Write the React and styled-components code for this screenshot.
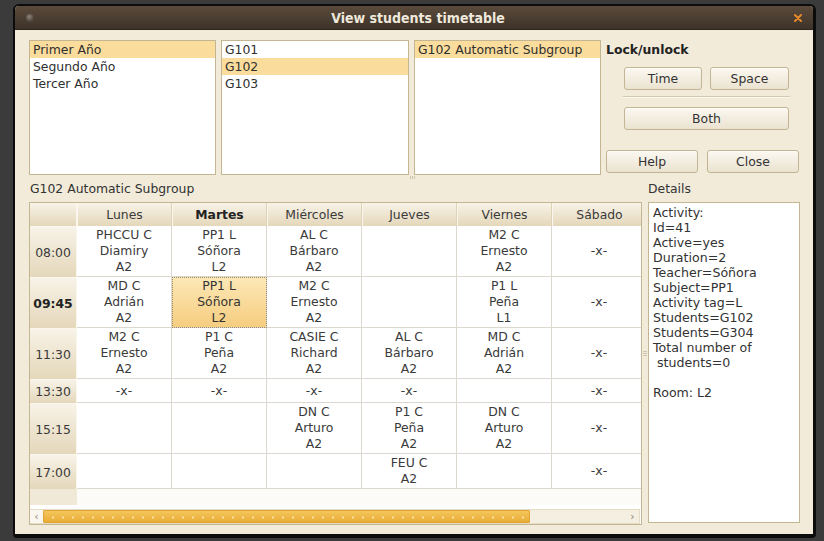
import React from 'react';
import styled, { createGlobalStyle, css } from 'styled-components';

const Global = createGlobalStyle`
  html, body { margin: 0; padding: 0; background: #3b3b3b; }
  body {
    font-family: "DejaVu Sans", "Liberation Sans", sans-serif;
    font-size: 12.4px;
    color: #333;
  }
  * { box-sizing: border-box; }
`;

const Screen = styled.div`
  width: 824px;
  height: 541px;
  padding: 4px 8px 3px 13px;
  display: flex;
`;

const Window = styled.div`
  flex: 1;
  display: flex;
  flex-direction: column;
  background: #f2ebda;
  border-style: solid;
  border-color: #0c0c0c;
  border-width: 2px 3px 4px 2px;
  border-radius: 6px 6px 4px 4px;
  overflow: hidden;
`;

const TitleBar = styled.div`
  height: 24px;
  flex: none;
  display: grid;
  grid-template-columns: 30px 1fr 30px;
  align-items: center;
  background: linear-gradient(#5a4a3b, #3e3329);
  border-bottom: 1px solid #2e261e;
`;

const WinDot = styled.span`
  justify-self: start;
  margin-left: 11px;
  width: 8px;
  height: 8px;
  border-radius: 50%;
  background: radial-gradient(circle at 40% 35%, #8c837a, #4b4138 70%);
`;

const Title = styled.div`
  text-align: center;
  font-family: "DejaVu Sans Condensed", "DejaVu Sans", sans-serif;
  font-stretch: condensed;
  font-weight: bold;
  font-size: 14px;
  color: #efe9dc;
  padding-left: 8px;
`;

const CloseX = styled.svg`
  justify-self: center;
  width: 8px;
  height: 8px;
`;

const Content = styled.div`
  flex: 1;
  display: flex;
  flex-direction: column;
  padding: 10px 13px 9px 14px;
`;

const TopSection = styled.div`
  height: 135px;
  flex: none;
  display: flex;
  gap: 5px;
`;

const ListBox = styled.div`
  width: ${p => p.$w}px;
  flex: none;
  background: #fff;
  border: 1px solid #c4b692;
`;

const ListItem = styled.div`
  height: 17px;
  line-height: 17px;
  padding-left: 3px;
  color: #2f2f2f;
  background: ${p => (p.$selected ? '#fadc9c' : 'transparent')};
  white-space: nowrap;
`;

const Panel = styled.div`
  flex: 1;
  display: flex;
  flex-direction: column;
`;

const PanelTitle = styled.div`
  font-weight: bold;
  margin-top: 3px;
  line-height: 14px;
  color: #222;
`;

const LockGroup = styled.div`
  margin: 10px 11px 0 18px;
  display: flex;
  flex-direction: column;
`;

const ButtonRow = styled.div`
  display: flex;
  gap: ${p => p.$gap}px;
`;

const Button = styled.button`
  width: ${p => (p.$w ? `${p.$w}px` : '100%')};
  height: 23px;
  padding: 0;
  font-family: "DejaVu Sans", sans-serif;
  font-size: 12.4px;
  color: #333;
  background: linear-gradient(#fbf8f1, #ebe3d0);
  border: 1px solid #c3b594;
  border-radius: 3px;
  box-shadow: inset 0 1px 0 #fffdf8;
`;

const Separator = styled.div`
  margin: 6px -1px 9px -1px;
  height: 2px;
  border-top: 1px solid #d5cab0;
  border-bottom: 1px solid #fbf8f1;
`;

const BottomButtons = styled(ButtonRow)`
  margin-top: auto;
  margin-bottom: 2px;
`;

const HHandle = styled.div`
  height: 6px;
  flex: none;
  display: flex;
  justify-content: center;
  align-items: flex-start;
  padding-top: 1px;
  gap: 1px;
  padding-right: 4px;
`;

const Tick = styled.span`
  width: 1px;
  height: 3px;
  background: #cfc4aa;
`;

const BottomSection = styled.div`
  flex: 1;
  display: flex;
`;

const Column = styled.div`
  width: ${p => p.$w}px;
  flex: none;
  display: flex;
  flex-direction: column;
`;

const SectionLabel = styled.div`
  height: 21px;
  line-height: 15px;
  padding-left: ${p => p.$pl || 0}px;
  color: #333;
  flex: none;
`;

const VHandle = styled.div`
  width: 6px;
  flex: none;
  display: flex;
  flex-direction: column;
  justify-content: center;
  align-items: center;
  gap: 1px;
  padding-top: 1px;
`;

const HTick = styled.span`
  width: 4px;
  height: 1px;
  background: #cfc4aa;
`;

const TableFrame = styled.div`
  flex: 1;
  display: flex;
  flex-direction: column;
  border: 1px solid #c4b692;
  background: #fff;
  overflow: hidden;
`;

const Viewport = styled.div`
  flex: 1;
  overflow: hidden;
  background: linear-gradient(to right, #f1e9d7 47px, #fcfbf8 47px);
`;

const Grid = styled.div`
  display: grid;
  grid-template-columns: 47px repeat(6, 95px);
  grid-template-rows: 23px 51px 51px 51px 24px 51px 35px;
  width: max-content;
`;

const headerBg = css`
  background: linear-gradient(#f8f3e8, #e4d7ba);
`;

const Corner = styled.div`
  ${headerBg};
  border-right: 1px solid #fbf7ee;
`;

const HeaderCell = styled.div`
  ${headerBg};
  display: flex;
  align-items: center;
  justify-content: center;
  font-weight: ${p => (p.$bold ? 'bold' : 'normal')};
  color: ${p => (p.$bold ? '#222' : '#3a3a3a')};
  border-left: 1px solid #fbf7ee;
  border-right: 1px solid #ddd1b6;
`;

const TimeCell = styled.div`
  ${headerBg};
  display: flex;
  align-items: center;
  justify-content: center;
  font-weight: ${p => (p.$bold ? 'bold' : 'normal')};
  color: ${p => (p.$bold ? '#222' : '#3a3a3a')};
  border-top: 1px solid #fbf7ee;
  border-right: 1px solid #fbf7ee;
`;

const Cell = styled.div`
  display: flex;
  flex-direction: column;
  align-items: center;
  justify-content: center;
  line-height: 16px;
  color: #3a3a3a;
  background: #fff;
  border-right: 1px solid #dcd8cf;
  border-bottom: 1px solid #dcd8cf;
  white-space: nowrap;
  ${p =>
    p.$selected &&
    css`
      background: linear-gradient(#fde8b6, #f5cd80);
      outline: 1px dotted #9a8a66;
      outline-offset: -1px;
      color: #333;
    `}
`;

const ScrollBar = styled.div`
  height: 15px;
  margin: 4px 1px 0 0;
  flex: none;
  display: flex;
  background: #f5efe2;
  border: 1px solid #e6dcc6;
  border-left: none;
`;

const Arrow = styled.div`
  width: 13px;
  flex: none;
  display: flex;
  align-items: center;
  justify-content: center;
  color: #8f8574;
  font-size: 11px;
  background: ${p => (p.$light ? '#faf7f0' : 'transparent')};
`;

const Trough = styled.div`
  flex: 1;
  display: flex;
`;

const Thumb = styled.div`
  width: 487px;
  height: 100%;
  border-radius: 1px;
  background-image: radial-gradient(circle, #fbe3a2 0.9px, transparent 1.3px),
    linear-gradient(#f5c65c, #e9ad38);
  background-size: 10px 13px, 100% 100%;
  background-position: 4px 0, 0 0;
  background-repeat: repeat-x, no-repeat;
  border: 1px solid #dfa431;
`;

const DetailsBox = styled.div`
  flex: 1;
  margin-bottom: 2px;
  background: #fff;
  border: 1px solid #c4b692;
  padding: 2px 4px;
  font-size: 12.6px;
  line-height: 15px;
  white-space: pre;
  color: #333;
  overflow: hidden;
`;

const days = ['Lunes', 'Martes', 'Miércoles', 'Jueves', 'Viernes', 'Sábado'];

const X = '-x-';
const rows = [
  ['08:00', ['PHCCU C\nDiamiry\nA2', 'PP1 L\nSóñora\nL2', 'AL C\nBárbaro\nA2', '', 'M2 C\nErnesto\nA2', X]],
  ['09:45', ['MD C\nAdrián\nA2', 'PP1 L\nSóñora\nL2', 'M2 C\nErnesto\nA2', '', 'P1 L\nPeña\nL1', X]],
  ['11:30', ['M2 C\nErnesto\nA2', 'P1 C\nPeña\nA2', 'CASIE C\nRichard\nA2', 'AL C\nBárbaro\nA2', 'MD C\nAdrián\nA2', X]],
  ['13:30', [X, X, X, X, '', X]],
  ['15:15', ['', '', 'DN C\nArturo\nA2', 'P1 C\nPeña\nA2', 'DN C\nArturo\nA2', X]],
  ['17:00', ['', '', '', 'FEU C\nA2', '', X]],
];

const details = `Activity:
Id=41
Active=yes
Duration=2
Teacher=Sóñora
Subject=PP1
Activity tag=L
Students=G102
Students=G304
Total number of
 students=0

Room: L2`;

export default function App() {
  return (
    <>
      <Global />
      <Screen>
        <Window>
          <TitleBar>
            <WinDot />
            <Title>View students timetable</Title>
            <CloseX viewBox="0 0 8 8">
              <path d="M1 1 L7 7 M7 1 L1 7" stroke="#e3892a" strokeWidth="2" strokeLinecap="round" />
            </CloseX>
          </TitleBar>
          <Content>
            <TopSection>
              <ListBox $w={187}>
                <ListItem $selected>Primer Año</ListItem>
                <ListItem>Segundo Año</ListItem>
                <ListItem>Tercer Año</ListItem>
              </ListBox>
              <ListBox $w={188}>
                <ListItem>G101</ListItem>
                <ListItem $selected>G102</ListItem>
                <ListItem>G103</ListItem>
              </ListBox>
              <ListBox $w={187}>
                <ListItem $selected>G102 Automatic Subgroup</ListItem>
              </ListBox>
              <Panel>
                <PanelTitle>Lock/unlock</PanelTitle>
                <LockGroup>
                  <ButtonRow $gap={8}>
                    <Button $w={78}>Time</Button>
                    <Button $w={79}>Space</Button>
                  </ButtonRow>
                  <Separator />
                  <Button>Both</Button>
                </LockGroup>
                <BottomButtons $gap={9}>
                  <Button $w={92}>Help</Button>
                  <Button $w={92}>Close</Button>
                </BottomButtons>
              </Panel>
            </TopSection>
            <HHandle>
              <Tick />
              <Tick />
              <Tick />
            </HHandle>
            <BottomSection>
              <Column $w={613}>
                <SectionLabel $pl={1}>G102 Automatic Subgroup</SectionLabel>
                <TableFrame>
                  <Viewport>
                    <Grid>
                      <Corner />
                      {days.map(d => (
                        <HeaderCell key={d} $bold={d === 'Martes'}>
                          {d}
                        </HeaderCell>
                      ))}
                      {rows.map(([time, cells]) => (
                        <React.Fragment key={time}>
                          <TimeCell $bold={time === '09:45'}>{time}</TimeCell>
                          {cells.map((c, i) => (
                            <Cell key={i} $selected={time === '09:45' && i === 1}>
                              {c.split('\n').filter(Boolean).map((l, j) => (
                                <span key={j}>{l}</span>
                              ))}
                            </Cell>
                          ))}
                        </React.Fragment>
                      ))}
                    </Grid>
                  </Viewport>
                  <ScrollBar>
                    <Arrow $light>‹</Arrow>
                    <Trough>
                      <Thumb />
                    </Trough>
                    <Arrow>›</Arrow>
                  </ScrollBar>
                </TableFrame>
              </Column>
              <VHandle>
                <HTick />
                <HTick />
                <HTick />
              </VHandle>
              <Column $w={152}>
                <SectionLabel>Details</SectionLabel>
                <DetailsBox>{details}</DetailsBox>
              </Column>
            </BottomSection>
          </Content>
        </Window>
      </Screen>
    </>
  );
}
